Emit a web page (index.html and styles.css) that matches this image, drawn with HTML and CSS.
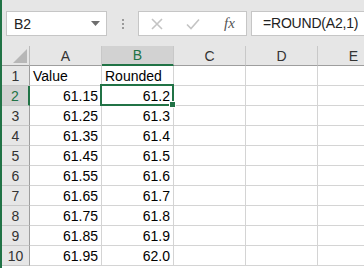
FILE: index.html
```html
<!DOCTYPE html>
<html lang="en">
<head>
    <meta charset="utf-8" />
    <title>ROUND</title>
    <link rel="stylesheet" href="styles.css">
</head>
<body>
    <div class="window">

        <!-- formula bar -->
        <div class="formula-bar">
            <div class="name-box">
                <span>B2</span>
                <svg class="drop" width="9" height="5" viewBox="0 0 9 5"><path d="M0 0h9L4.5 5z" fill="#6e6e6e"/></svg>
            </div>
            <div class="grip"><i></i><i></i><i></i></div>
            <div class="fx-box">
                <svg class="ico x" width="12" height="12" viewBox="0 0 12 12"><path d="M1 1l10 10M11 1L1 11" stroke="#c4c4c4" stroke-width="1.6" fill="none"/></svg>
                <svg class="ico ok" width="14" height="12" viewBox="0 0 14 12"><path d="M1 6.5l4 4 8-9" stroke="#c4c4c4" stroke-width="1.6" fill="none"/></svg>
                <span class="fx">fx</span>
            </div>
            <div class="formula">=ROUND(A2,1)</div>
        </div>

        <!-- sheet -->
        <div class="sheet">
            <div class="hd corner"><svg width="14" height="14" viewBox="0 0 14 14"><path d="M14 0v14H0z" fill="#b7b7b7"/></svg></div>
            <div class="hd col">A</div>
            <div class="hd col sel">B</div>
            <div class="hd col">C</div>
            <div class="hd col">D</div>
            <div class="hd col">E</div>

            <div class="hd row">1</div>
            <div class="cell">Value</div>
            <div class="cell">Rounded</div>
            <div class="cell"></div><div class="cell"></div><div class="cell"></div>
        </div>
    </div>

    <script>
        const datos = [
            ["61.15", "61.2"], ["61.25", "61.3"], ["61.35", "61.4"],
            ["61.45", "61.5"], ["61.55", "61.6"], ["61.65", "61.7"],
            ["61.75", "61.8"], ["61.85", "61.9"], ["61.95", "62.0"]
        ];

        const sheet = document.querySelector(".sheet");

        datos.forEach((fila, i) => {
            const n = i + 2;
            sheet.insertAdjacentHTML("beforeend", `
                <div class="hd row ${n === 2 ? "sel" : ""}">${n}</div>
                <div class="cell num">${fila[0]}</div>
                <div class="cell num ${n === 2 ? "active" : ""}">${fila[1]}</div>
                <div class="cell"></div><div class="cell"></div><div class="cell"></div>
            `);
        });
    </script>
</body>
</html>
```

FILE: styles.css
```css
body {
    margin: 0;
    padding: 0;
    background-color: #ffffff;
    font-family: 'Liberation Sans', Arial, sans-serif;
    overflow: hidden;
}

.window {
    border-left: 2px solid #217346;
    height: 268px;
    overflow: hidden;
}

.formula-bar {
    display: flex;
    align-items: flex-start;
    height: 46px;
    background-color: #e6e6e6;
    padding-top: 11px;
    box-sizing: border-box;
}

.name-box {
    display: flex;
    align-items: center;
    justify-content: space-between;
    width: 101px;
    height: 25px;
    margin-left: 4px;
    padding: 0 6px 0 7px;
    box-sizing: border-box;
    background-color: #ffffff;
    border: 1px solid #c6c6c6;
    font-size: 14px;
    color: #222;
}

.grip {
    display: flex;
    flex-direction: column;
    gap: 2px;
    width: 31px;
    align-items: center;
    padding-top: 8px;
}

    .grip i {
        width: 2px;
        height: 2px;
        background-color: #9a9a9a;
    }

.fx-box {
    display: flex;
    align-items: center;
    width: 109px;
    height: 25px;
    box-sizing: border-box;
    padding-left: 12px;
    background-color: #ffffff;
    border: 1px solid #c6c6c6;
}

    .fx-box .x {
        margin-right: 23px;
    }

    .fx-box .ok {
        margin-right: 24px;
    }

.fx {
    font-family: 'Liberation Serif', 'Times New Roman', serif;
    font-style: italic;
    font-size: 15px;
    color: #555;
}

.formula {
    flex: 1;
    height: 25px;
    margin-left: 4px;
    box-sizing: border-box;
    padding: 3px 0 0 11px;
    background-color: #ffffff;
    border: 1px solid #c6c6c6;
    border-right: none;
    font-size: 14px;
    letter-spacing: -0.2px;
    color: #222;
}

.sheet {
    display: grid;
    grid-template-columns: 28px repeat(5, 72px);
    grid-auto-rows: 20px;
}

.hd {
    background-color: #e6e6e6;
    border-right: 1px solid #bcbcbc;
    border-bottom: 1px solid #bcbcbc;
    display: flex;
    align-items: center;
    justify-content: center;
    font-size: 14px;
    color: #333;
}

.corner {
    align-items: flex-end;
    justify-content: flex-end;
    padding: 0 2px 2px 0;
    border-bottom-color: #9e9e9e;
}

.hd.col {
    border-bottom: 1px solid #9e9e9e;
    border-right-color: #c8c8c8;
}

.hd.row {
    border-bottom-color: #c8c8c8;
    border-right-color: #9e9e9e;
    color: #333;
}

.hd.col.sel {
    background-color: #d2d2d2;
    border-bottom: 2px solid #217346;
    color: #217346;
}

.hd.row.sel {
    background-color: #d2d2d2;
    border-right: 2px solid #217346;
    color: #217346;
}

.cell {
    border-right: 1px solid #d4d4d4;
    border-bottom: 1px solid #d4d4d4;
    font-size: 14px;
    color: #000;
    padding: 2px 3px 0 3px;
    white-space: nowrap;
    position: relative;
}

.cell.num {
    text-align: right;
}

.cell.active {
    z-index: 1;
}

    .cell.active::before {
        content: "";
        position: absolute;
        top: -2px;
        left: -2px;
        right: -1px;
        bottom: -1px;
        border: 2px solid #217346;
    }

    .cell.active::after {
        content: "";
        position: absolute;
        right: -3px;
        bottom: -3px;
        width: 5px;
        height: 5px;
        background-color: #217346;
        border: 1px solid #ffffff;
    }
```
